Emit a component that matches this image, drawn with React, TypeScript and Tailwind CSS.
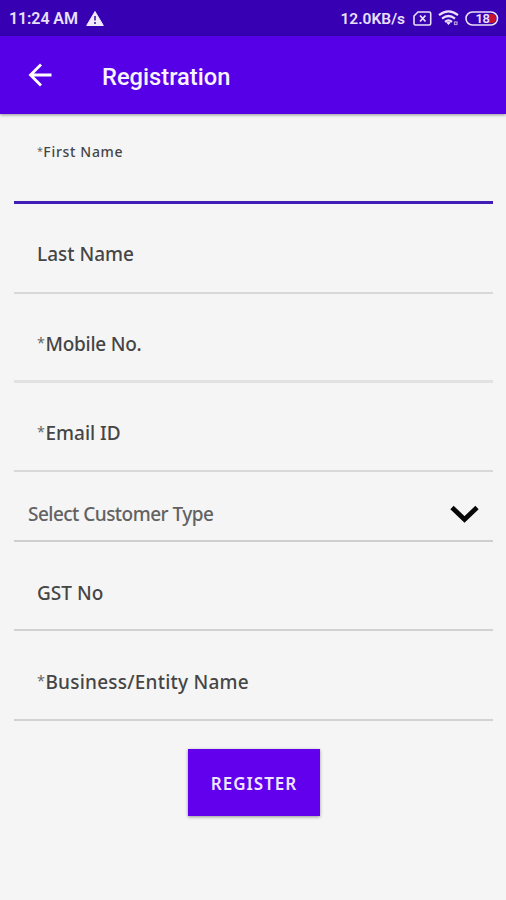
import type { ReactNode } from 'react';
import clsx from 'clsx';

interface FieldProps {
  label: string;
  required?: boolean;
  className: string;
  textClass: string;
}

// Text field with an underline
function Field({ label, required, className, textClass }: FieldProps) {
  return (
    <label className={clsx('flex items-start pl-[23px]', className)}>
      <span className={clsx('flex whitespace-pre text-[#454545]', textClass)}>
        {required && (
          <span className="-mt-px mr-[0.5px] text-[0.76em] font-normal tracking-normal text-[#666666]">*</span>
        )}
        <span>{label}</span>
      </span>
    </label>
  );
}

function StatusBar() {
  return (
    <div className="flex h-9 items-center bg-[#3700b3] pl-[9px] pr-[7px] pt-[2px] text-[#e9e0fb] font-['Roboto',sans-serif]">
      <span className="text-[16px] font-semibold leading-5 tracking-[-0.1px]">11:24 AM</span>
      <svg className="ml-[8px] mb-[2px] h-[15px] w-[18px]" viewBox="0 0 18 15">
        <path d="M9 0.5 17.3 14.5H0.7Z" fill="#f1eafd" stroke="#f1eafd" strokeLinejoin="round" />
        <path d="M9 5v4.5M9 11v2" stroke="#6542ae" strokeWidth="2" />
      </svg>
      <span className="ml-auto text-[15.5px] font-semibold leading-5">12.0KB/s</span>
      <svg className="ml-[8px] mb-[2px] h-[15px] w-[19px]" viewBox="0 0 19 15" fill="none" stroke="currentColor">
        <path d="M5 1h11.2q1.5 0 1.5 1.5v10q0 1.5-1.5 1.5H2.5Q1 14 1 12.5V5Z" strokeWidth="1.6" />
        <path d="m7 4.5 5.5 6M12.5 4.5l-5.5 6" strokeWidth="1.8" />
      </svg>
      <svg className="ml-[6px] mb-[2px] h-[16px] w-[22px]" viewBox="0 0 22 16" fill="none" stroke="currentColor">
        <path d="M1 5.2Q10.5-2.5 20 5.2M4 8.6q6.5-5.2 13 0M7 11.8q3.5-2.8 7 0" strokeWidth="2.2" />
        <path d="m8.2 12.5 2.3 2.5 2.3-2.5q-2.3-1.6-4.6 0Z" fill="currentColor" stroke="none" />
        <rect x="16.5" y="12" width="2.5" height="2.5" strokeWidth="1.2" opacity="0.7" />
      </svg>
      <svg className="ml-[5px] mb-[2px] h-[15px] w-[34px]" viewBox="0 0 34 15">
        <path d="M27 3q4 0 4 4.500t-4 4.500h-3v-9Z" fill="#c8102f" />
        <rect x="1" y="1" width="31.5" height="13" rx="6.5" fill="none" stroke="currentColor" strokeWidth="1.6" />
        <text x="10.5" y="12" fontSize="13" fontWeight="600" fill="currentColor" letterSpacing="-0.5">18</text>
      </svg>
    </div>
  );
}

function AppBar({ children }: { children: ReactNode }) {
  return (
    <header className="flex h-[78px] items-center bg-[#5600e8] pl-[28px] shadow-[0_1px_3px_rgba(0,0,0,0.4)]">
      <svg className="h-6 w-6" viewBox="0 0 24 24" fill="none" stroke="#fff" strokeWidth="2.8">
        <path d="M23.5 12H3M13 1.5 2.5 12 13 22.5" />
      </svg>
      <h1 className="ml-[50px] pt-[3px] text-[23.7px] font-medium leading-7 text-[#f8f3ff] font-['Roboto',sans-serif]">
        {children}
      </h1>
    </header>
  );
}

export default function App() {
  return (
    <div className="min-h-[900px] w-[506px] bg-[#f5f5f5] font-['Noto_Sans',sans-serif]">
      <StatusBar />
      <AppBar>Registration</AppBar>

      <form className="flex flex-col pl-[14px] pr-[13px]">
        <Field
          label="First Name"
          required
          className="h-[90px] border-b-[3px] border-[#411db8] pt-[28px]"
          textClass="text-[14px] font-medium leading-5 tracking-[0.68px]"
        />
        <Field
          label="Last Name"
          className="h-[90px] border-b-2 border-[#d8d8d8] pt-[36px]"
          textClass="text-[19px] font-medium leading-7"
        />
        <Field
          label="Mobile No."
          required
          className="h-[89px] border-b-[3px] border-[#e2e2e2] pt-[36px]"
          textClass="text-[19px] font-medium leading-7 tracking-[-0.25px]"
        />
        <Field
          label="Email ID"
          required
          className="h-[89px] border-b-2 border-[#d8d8d8] pt-[36px]"
          textClass="text-[19px] font-medium leading-7"
        />

        {/* Customer type dropdown */}
        <button
          type="button"
          className="flex h-[70px] items-start justify-between border-b-2 border-[#cecece] pl-[14px] pr-[14px] pt-[28px]"
        >
          <span className="text-[19px] font-medium leading-7 tracking-[-0.53px] text-[#626262]">
            Select Customer Type
          </span>
          <svg className="mt-[5px] h-[19px] w-[29px]" viewBox="0 0 29 19" fill="none" stroke="#080808" strokeWidth="4.8">
            <path d="m2 2.5 12.5 12L27 2.5" />
          </svg>
        </button>

        <Field
          label="GST No"
          className="h-[89px] border-b-2 border-[#d2d2d2] pt-[37px]"
          textClass="text-[19px] font-medium leading-7"
        />
        <Field
          label="Business/Entity Name"
          required
          className="h-[90px] border-b-2 border-[#d2d2d2] pt-[37px]"
          textClass="text-[19px] font-medium leading-7 tracking-[0.22px]"
        />

        <button
          type="button"
          className="ml-[174px] mt-[28px] h-[67px] w-[132px] bg-[#6200ee] pt-[2px] text-[17px] font-semibold tracking-[1px] text-[#f0e6ff] shadow-[0_1px_3px_rgba(0,0,0,0.4)]"
        >
          REGISTER
        </button>
      </form>
    </div>
  );
}
